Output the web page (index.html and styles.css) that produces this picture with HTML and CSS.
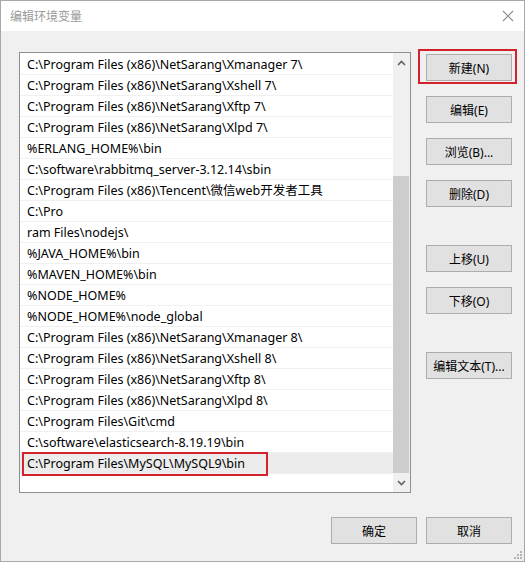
FILE: index.html
```html
<!DOCTYPE html>
<html lang="zh-CN">
<head>
  <meta charset="UTF-8" />
  <title>编辑环境变量</title>
  <link rel="stylesheet" href="styles.css">
</head>
<body>

  <div class="window">
    <div class="titlebar">
      <span class="title">编辑环境变量</span>
      <svg class="close" width="12" height="12" viewBox="0 0 12 12">
        <path d="M1 1 L11 11 M11 1 L1 11" stroke="#8c8c8c" stroke-width="1.1" fill="none"/>
      </svg>
    </div>

    <div class="content">
      <div class="listbox">
        <ul class="paths">
          <li>C:\Program Files (x86)\NetSarang\Xmanager 7\</li>
          <li>C:\Program Files (x86)\NetSarang\Xshell 7\</li>
          <li>C:\Program Files (x86)\NetSarang\Xftp 7\</li>
          <li>C:\Program Files (x86)\NetSarang\Xlpd 7\</li>
          <li>%ERLANG_HOME%\bin</li>
          <li>C:\software\rabbitmq_server-3.12.14\sbin</li>
          <li>C:\Program Files (x86)\Tencent\微信web开发者工具</li>
          <li>C:\Pro</li>
          <li>ram Files\nodejs\</li>
          <li>%JAVA_HOME%\bin</li>
          <li>%MAVEN_HOME%\bin</li>
          <li>%NODE_HOME%</li>
          <li>%NODE_HOME%\node_global</li>
          <li>C:\Program Files (x86)\NetSarang\Xmanager 8\</li>
          <li>C:\Program Files (x86)\NetSarang\Xshell 8\</li>
          <li>C:\Program Files (x86)\NetSarang\Xftp 8\</li>
          <li>C:\Program Files (x86)\NetSarang\Xlpd 8\</li>
          <li>C:\Program Files\Git\cmd</li>
          <li>C:\software\elasticsearch-8.19.19\bin</li>
          <li class="selected">C:\Program Files\MySQL\MySQL9\bin<span class="mark"></span></li>
        </ul>
        <div class="scrollbar">
          <span class="arrow">
            <svg width="9" height="6" viewBox="0 0 9 6"><path d="M1 5 L4.5 1.5 L8 5" stroke="#606060" stroke-width="1.6" fill="none"/></svg>
          </span>
          <div class="track"><div class="thumb"></div></div>
          <span class="arrow">
            <svg width="9" height="6" viewBox="0 0 9 6"><path d="M1 1 L4.5 4.5 L8 1" stroke="#606060" stroke-width="1.6" fill="none"/></svg>
          </span>
        </div>
      </div>

      <div class="actions">
        <button class="btn">新建(N)<span class="mark"></span></button>
        <button class="btn">编辑(E)</button>
        <button class="btn">浏览(B)...</button>
        <button class="btn">删除(D)</button>
        <button class="btn group">上移(U)</button>
        <button class="btn">下移(O)</button>
        <button class="btn group">编辑文本(T)...</button>
      </div>
    </div>

    <div class="footer">
      <button class="btn">确定</button>
      <button class="btn">取消</button>
    </div>

    <svg class="grip" width="9" height="9" viewBox="0 0 9 9">
      <rect x="6" y="0" width="2" height="2" fill="#b4b4b4"/>
      <rect x="3" y="3" width="2" height="2" fill="#b4b4b4"/>
      <rect x="6" y="3" width="2" height="2" fill="#b4b4b4"/>
      <rect x="0" y="6" width="2" height="2" fill="#b4b4b4"/>
      <rect x="3" y="6" width="2" height="2" fill="#b4b4b4"/>
      <rect x="6" y="6" width="2" height="2" fill="#b4b4b4"/>
    </svg>
  </div>

</body>
</html>
```

FILE: styles.css
```css
body {
  margin: 0;
  background: #fff;
  font-family: 'Noto Sans', 'Noto Sans CJK SC', sans-serif;
  font-size: 12px;
  color: #000;
}
.window {
  position: relative;
  width: 523px;
  height: 560px;
  border: 1px solid #a8a8a8;
  background: #f0f0f0;
  display: flex;
  flex-direction: column;
}
.titlebar {
  height: 30px;
  background: #fff;
  display: flex;
  align-items: center;
  justify-content: space-between;
  padding: 0 9px 0 9px;
}
.title {
  color: #9a9a9a;
  font-size: 12px;
}
.close {
  margin-right: 1px;
}
.content {
  display: flex;
  padding: 21px 12px 0 18px;
}
.listbox {
  width: 390px;
  height: 439px;
  border: 1px solid #8e8f8f;
  background: #fff;
  display: flex;
}
.paths {
  list-style: none;
  margin: 0;
  padding: 1px 0 0 0;
  width: 373px;
  font-size: 12.5px;
}
.paths li {
  position: relative;
  height: 20px;
  line-height: 21px;
  padding-left: 7px;
  border-bottom: 1px solid #f0f0f0;
  white-space: nowrap;
}
.paths li.selected {
  background: #ececec;
}
.paths .mark {
  position: absolute;
  left: 2px;
  top: -1px;
  width: 246px;
  height: 24px;
  box-sizing: border-box;
  border: 2px solid #d3222c;
}
.scrollbar {
  width: 17px;
  background: #f0f0f0;
  display: flex;
  flex-direction: column;
}
.arrow {
  height: 19px;
  display: flex;
  align-items: center;
  justify-content: center;
}
.track {
  flex: 1;
  display: flex;
  flex-direction: column;
}
.thumb {
  margin: 104px 1px 0 0;
  flex: 1;
  background: #cdcdcd;
}
.actions {
  margin-left: 15px;
  padding-top: 2px;
  display: flex;
  flex-direction: column;
  gap: 15px;
}
.btn {
  position: relative;
  width: 86px;
  height: 27px;
  padding: 0;
  background: #e1e1e1;
  border: 1px solid #adadad;
  font-family: inherit;
  font-size: 12px;
  color: #000;
}
.actions .group {
  margin-top: 23px;
}
.actions .mark {
  position: absolute;
  left: -9px;
  top: -6px;
  width: 99px;
  height: 35px;
  box-sizing: border-box;
  border: 2px solid #d3222c;
}
.footer {
  display: flex;
  justify-content: flex-end;
  gap: 9px;
  padding: 24px 12px 0 0;
}
.grip {
  position: absolute;
  right: 1px;
  bottom: 1px;
}
```
